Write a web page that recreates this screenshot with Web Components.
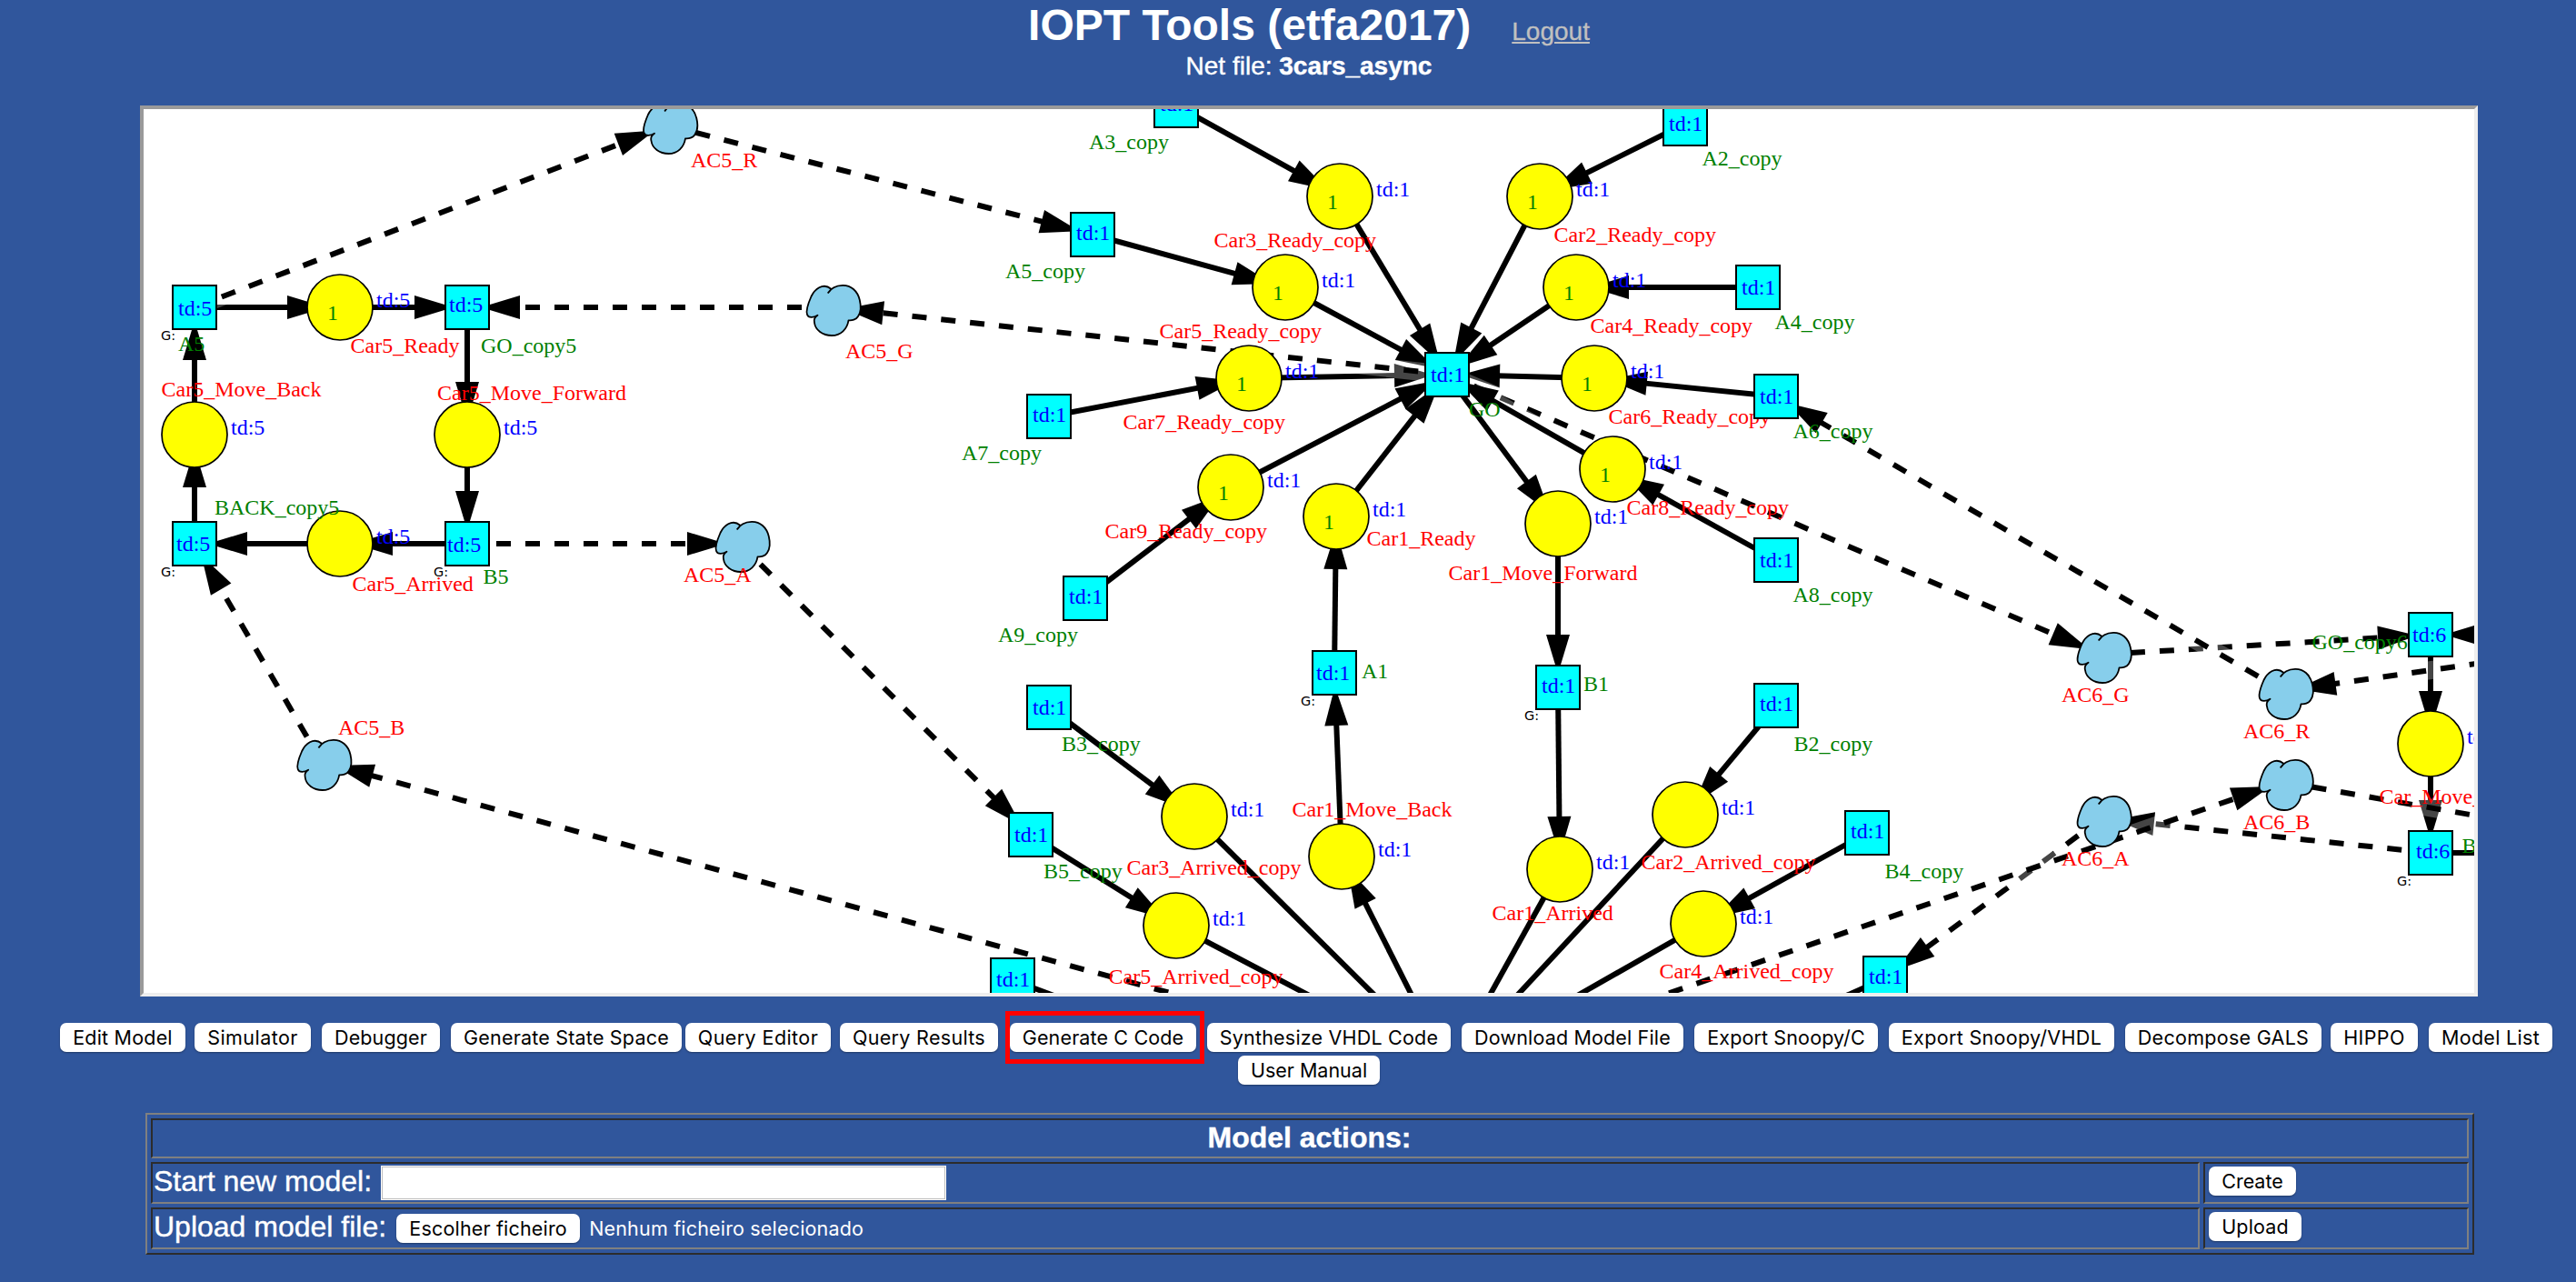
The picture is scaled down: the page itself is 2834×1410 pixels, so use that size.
<!DOCTYPE html>
<html lang="pt">
<head>
<meta charset="utf-8">
<title>IOPT Tools</title>
<style>
html,body{margin:0;padding:0;background:#30569c;overflow:hidden}
body{width:2834px;height:1410px;font-family:"Liberation Sans",Arial,sans-serif;color:#fff}
</style>
</head>
<body>
<iopt-app></iopt-app>
<script>
const define = (name, html, connected) => {
  const tpl = document.createElement('template');
  tpl.innerHTML = html;
  customElements.define(name, class extends HTMLElement {
    constructor() {
      super();
      this.attachShadow({ mode: 'open' }).append(tpl.content.cloneNode(true));
    }
    connectedCallback() { if (connected) connected.call(this, this.shadowRoot); }
  });
};

/* Push button; w = box width, gap = distance to the previous button */
define('aqua-button', `
<style>
:host{display:block;position:relative;flex:none;box-sizing:border-box;height:32px;background:#fff;border-radius:7px;
 box-shadow:0 1px 2px rgba(0,0,0,.35);color:#000;font:21.5px/33px Inter,sans-serif;text-align:center;white-space:nowrap;-webkit-text-stroke:0}
:host([marked])::after{content:"";position:absolute;box-sizing:border-box;left:-5px;top:-13px;width:219px;height:58px;border:5px solid #f00}
span{display:inline-block}
</style><span><slot></slot></span>`, function (root) {
  const w = +this.getAttribute('w');
  this.style.width = w + 'px';
  this.style.marginLeft = (this.getAttribute('gap') || 0) + 'px';
  const s = root.querySelector('span');
  const d = (w - 28 - s.offsetWidth) / this.textContent.length;
  s.style.letterSpacing = d.toFixed(3) + 'px';
});

define('page-header', `
<style>
:host{display:block;height:116px;padding-left:46px;box-sizing:border-box;text-align:center}
.t{display:flex;justify-content:center;align-items:baseline;height:56px}
h1{margin:0;font-size:48px;line-height:55px;font-weight:bold}
a{font-size:28px;color:#c0c0c0;text-decoration:underline;margin-left:45px;-webkit-text-stroke:.3px}
p{margin:0;font-size:28px;line-height:33px;-webkit-text-stroke:.4px}
</style>
<div class="t"><h1><slot name="title"></slot></h1><a><slot name="link"></slot></a></div>
<p><slot></slot></p>`);

define('tool-bar', `
<style>
:host{display:flex;flex-direction:column;gap:4px;margin-top:29px}
::slotted(div){display:flex}
</style><slot></slot>`);

define('file-picker', `
<style>
:host{display:flex;margin:5px 0 0 11px;font:21.5px/33px Inter,sans-serif;-webkit-text-stroke:0}
span{margin-left:10px;letter-spacing:.18px;white-space:nowrap}
</style><aqua-button w="202">Escolher ficheiro</aqua-button><span><slot></slot></span>`);

define('text-field', `
<style>
:host{display:block;box-sizing:border-box;width:622px;height:38px;margin:2px 0 0 10px;background:#fff;padding:1px}
div{height:34px;border:1px solid #bdbdbd}
</style><div></div>`);

define('action-table', `
<style>
:host{display:grid;grid-template-columns:2254px 292px;grid-template-rows:44px 46px 46px;gap:4px;box-sizing:border-box;
 width:2562px;height:156px;margin:31px 0 0 160px;padding:4px;border:2px solid;border-color:#808080 #2c2c2c #2c2c2c #808080;
 font-size:32px;line-height:38px;-webkit-text-stroke:.4px}
::slotted(*){display:flex;align-items:flex-start;box-sizing:border-box;border:2px solid;border-color:#2c2c2c #808080 #808080 #2c2c2c;padding-left:1px}
::slotted(.head){grid-column:1/3;justify-content:center;font-weight:bold;padding:0 1px 0 0}
::slotted(.act){padding:3px 0 0 4px}
</style><slot></slot>`);

/* ---- Petri net canvas ---- */
const R = 'red', G = 'green', B = 'blue';
// places: x, y, name, label x, label baseline, token, time domain
const places = [
 [374,338,'Car5_Ready',385.5,388,1,5],[214,478,'Car5_Move_Back',177.5,435.5,0,5],
 [514,478,'Car5_Move_Forward',481,439.5,0,5],[374,598,'Car5_Arrived',387.5,650,0,5],
 [1474,216,'Car3_Ready_copy',1335.5,272,1,1],[1414,316,'Car5_Ready_copy',1275.5,372,1,1],
 [1374,416,'Car7_Ready_copy',1235.5,472,1,1],[1354,536,'Car9_Ready_copy',1215.5,592,1,1],
 [1470,568,'Car1_Ready',1503.5,600,1,1],[1694,216,'Car2_Ready_copy',1709.5,266,1,1],
 [1734,316,'Car4_Ready_copy',1749.5,366,1,1],[1754,416,'Car6_Ready_copy',1769.5,466,1,1],
 [1774,516,'Car8_Ready_copy',1789.5,566,1,1],[1714,576,'Car1_Move_Forward',1593.5,638,0,1],
 [1476,942,'Car1_Move_Back',1421.5,898,0,1],[1314,898,'Car3_Arrived_copy',1239.5,962,0,1],
 [1294,1018,'Car5_Arrived_copy',1219.5,1082,0,1],[1716,956,'Car1_Arrived',1641.5,1012,0,1],
 [1854,896,'Car2_Arrived_copy',1805.5,956,0,1],[1874,1016,'Car4_Arrived_copy',1825.5,1076,0,1],
 [2674,818,'Car_Move_',2617.5,884,0,6]];
// channels: x, y, name, label x, label baseline
const clouds = [
 [734.5,138,'AC5_R',760,184],[914,338,'AC5_G',930,394],[814,598,'AC5_A',752,640],[353.7,838,'AC5_B',372,808],
 [2312,720,'AC6_G',2268,772],[2512,760,'AC6_R',2468,812],[2512,860,'AC6_B',2468,912],[2312,900,'AC6_A',2268,952]];
// transitions: x, y, domain, domain dx, domain dy, name, label x, label baseline, guard flag
const trans = [
 [214,338,5,-18,9,'A5',196,386,1],[514,338,5,-20,5,'GO_copy5',529,388],[214,598,5,-20,8,'BACK_copy5',236,566,1],
 [514,598,5,-22,9,'B5',531.5,642,1],[1294,116,1,-18,6,'A3_copy',1198,164],[1202,258,1,-18,6,'A5_copy',1106,306],
 [1154,458,1,-18,6,'A7_copy',1058,506],[1194,658,1,-18,6,'A9_copy',1098,706],[1154,778,1,-18,8,'B3_copy',1168,826],
 [1134,918,1,-18,8,'B5_copy',1148,966],[1114,1078,1,-18,7,'',0,0],[1468,740,1,-20,8,'A1',1498,746,1],
 [1592,412,1,-18,8,'GO',1616,458],[1854,136,1,-18,8,'A2_copy',1872.5,182],[1934,316,1,-18,8,'A4_copy',1952.5,362],
 [1954,436,1,-18,8,'A6_copy',1972.5,482],[1954,616,1,-18,8,'A8_copy',1972.5,662],[1714,756,1,-18,6,'B1',1742,760,1],
 [1954,776,1,-18,6,'B2_copy',1973.5,826],[2054,916,1,-18,6,'B4_copy',2073.5,966],[2074,1076,1,-18,6,'',0,0],
 [2674,698,6,-20,8,'GO_copy6',2543.5,714],[2674,938,6,-16,6,'B6',2708.5,938,1]];
// arcs: x1, y1, x2, y2, flags (d = dashed, h = pick halo)
const BK = [1594,1175.5];
const arcs = [
 [214,338,374,338],[374,338,514,338],[514,338,514,478],[514,478,514,598],[514,598,374,598],[374,598,214,598],
 [214,598,214,478],[214,478,214,338],
 [214,338,734.5,138,'dh'],[734.5,138,1202,258,'dh'],[914,338,514,338,'dh'],[514,598,814,598,'dh'],
 [814,598,1134,918,'dh'],[353.7,838,214,598,'dh'],[...BK,353.7,838,'dh'],
 [1294,116,1474,216],[1202,258,1414,316],[1154,458,1374,416],[1194,658,1354,536],
 [1474,216,1592,412],[1414,316,1592,412],[1374,416,1592,412],[1354,536,1592,412],[1470,568,1592,412],
 [1592,412,914,338,'dh'],
 [1694,216,1592,412],[1734,316,1592,412],[1754,416,1592,412],
 [1592,412,2312,720,'dh'],[1774,516,1592,412,'h'],
 [1854,136,1694,216],[1934,316,1734,316],[1954,436,1754,416],[1954,616,1774,516],
 [1592,412,1714,576],[1714,576,1714,756],[1714,756,1716,956],
 [1476,942,1468,740],[1468,740,1470,568],[...BK,1476,942],
 [1154,778,1314,898],[1134,918,1294,1018],[1114,1078,1274,1138],[1314,898,...BK],[1294,1018,...BK],
 [1716,956,...BK],[1854,896,...BK],[1874,1016,...BK],
 [1954,776,1854,896],[2054,916,1874,1016],[2074,1076,1894,1156],
 [2834,698,2674,698],[2674,698,2674,818],[2674,818,2674,938],[2674,938,2834,938],
 [2312,720,2674,698,'dh'],[2512,760,1954,436,'dh'],[2986,693,2512,760,'dh'],[2512,860,2974,941,'dh'],
 [2674,938,2312,900,'dh'],[2312,900,2074,1076,'dh'],[...BK,2512,860,'dh']];

const cloudPath = 'M.3,-20.3C-9,-28 -18,-19 -21.5,-12C-25,-4 -27.5,4 -26,8C-24.5,12.5 -18,11 -14.5,8.8C-18,11 -18.8,14 -18,17C-17,25 -9,31 1,31C11,31 18,24 19.5,14.3C23,14.8 28,13.5 30,10C33.5,5 33.5,-1 31.8,-8C29.5,-18 22,-24.5 13,-24.2C5,-24 0,-21 -3.3,-15.5';
const txt = (x, y, c, s) => `<text x="${x}" y="${y}" fill="${c}">${s}</text>`;

function drawNet() {
  let o = '';
  for (const [x1, y1, x2, y2, f = ''] of arcs) {
    const L = Math.hypot(x2 - x1, y2 - y1), ux = (x2 - x1) / L, uy = (y2 - y1) / L;
    const ex = x2 - ux * 34, ey = y2 - uy * 34, bx = x2 - ux * 58, by = y2 - uy * 58;
    const line = `x1="${x1}" y1="${y1}" x2="${ex}" y2="${ey}"`;
    if (f.includes('h')) o += `<line ${line} stroke="#fff" stroke-opacity=".27" stroke-width="20"/>`;
    o += `<line ${line} stroke="#000" stroke-width="6"${f.includes('d') ? ' stroke-dasharray="16 16"' : ''}/>`;
    o += `<polygon points="${x2 - ux * 15},${y2 - uy * 15} ${bx - uy * 13},${by + ux * 13} ${bx + uy * 13},${by - ux * 13}"/>`;
  }
  for (const [x, y, n, lx, ly, tok, td] of places) {
    o += `<circle cx="${x}" cy="${y}" r="36" fill="#ff0" stroke="#000" stroke-width="1.7"/>`;
    if (tok) o += txt(x - 14, y + 14, G, '1');
    o += txt(x + 40, y, B, 'td:' + td) + txt(lx, ly, R, n);
  }
  for (const [x, y, n, lx, ly] of clouds)
    o += `<path transform="translate(${x} ${y})" d="${cloudPath}" fill="#87ceeb" stroke="#000" stroke-width="1.8" stroke-linejoin="round"/>` + txt(lx, ly, R, n);
  for (const [x, y, td, dx, dy, n, lx, ly, g] of trans) {
    o += `<rect x="${x - 24}" y="${y - 24}" width="48" height="48" fill="#0ff" stroke="#000" stroke-width="2"/>` + txt(x + dx, y + dy, B, 'td:' + td);
    if (n) o += txt(lx, ly, G, n);
    if (g) o += `<text class="g" x="${x - 37}" y="${y + 36}">G:</text>`;
  }
  return o;
}

define('petri-net', `
<style>
:host{display:block;box-sizing:border-box;width:2572px;height:980px;margin-left:154px;background:#fff;border:4px solid;border-color:#9a9a9a #eee #eee #9a9a9a;overflow:hidden}
svg{display:block}
text{font:24px "Liberation Serif","Times New Roman",serif}
.g{font:14.5px "DejaVu Sans",sans-serif}
</style>
<svg width="2564" height="972" viewBox="158 120 2564 972">${drawNet()}</svg>`);

define('iopt-app', `
<style>:host{display:flex;flex-direction:column;width:2834px;height:1410px;overflow:hidden}
span{white-space:pre}</style>
<page-header><span slot="title">IOPT Tools (etfa2017)</span><span slot="link">Logout</span>Net file: <b>3cars_async</b></page-header>
<petri-net></petri-net>
<tool-bar>
 <div>
  <aqua-button w="138" gap="66">Edit Model</aqua-button>
  <aqua-button w="128" gap="10">Simulator</aqua-button>
  <aqua-button w="130" gap="12">Debugger</aqua-button>
  <aqua-button w="254" gap="12">Generate State Space</aqua-button>
  <aqua-button w="160" gap="4">Query Editor</aqua-button>
  <aqua-button w="174" gap="10">Query Results</aqua-button>
  <aqua-button w="205" gap="13" marked>Generate C Code</aqua-button>
  <aqua-button w="268" gap="12">Synthesize VHDL Code</aqua-button>
  <aqua-button w="244" gap="12">Download Model File</aqua-button>
  <aqua-button w="202" gap="12">Export Snoopy/C</aqua-button>
  <aqua-button w="248" gap="12">Export Snoopy/VHDL</aqua-button>
  <aqua-button w="216" gap="12">Decompose GALS</aqua-button>
  <aqua-button w="96" gap="10">HIPPO</aqua-button>
  <aqua-button w="136" gap="12">Model List</aqua-button>
 </div>
 <div><aqua-button w="156" gap="1362">User Manual</aqua-button></div>
</tool-bar>
<action-table>
 <div class="head">Model actions:</div>
 <div>Start new model:<text-field></text-field></div>
 <div class="act"><aqua-button w="96">Create</aqua-button></div>
 <div>Upload model file:<file-picker>Nenhum ficheiro selecionado</file-picker></div>
 <div class="act"><aqua-button w="102">Upload</aqua-button></div>
</action-table>`);
</script>
</body>
</html>
